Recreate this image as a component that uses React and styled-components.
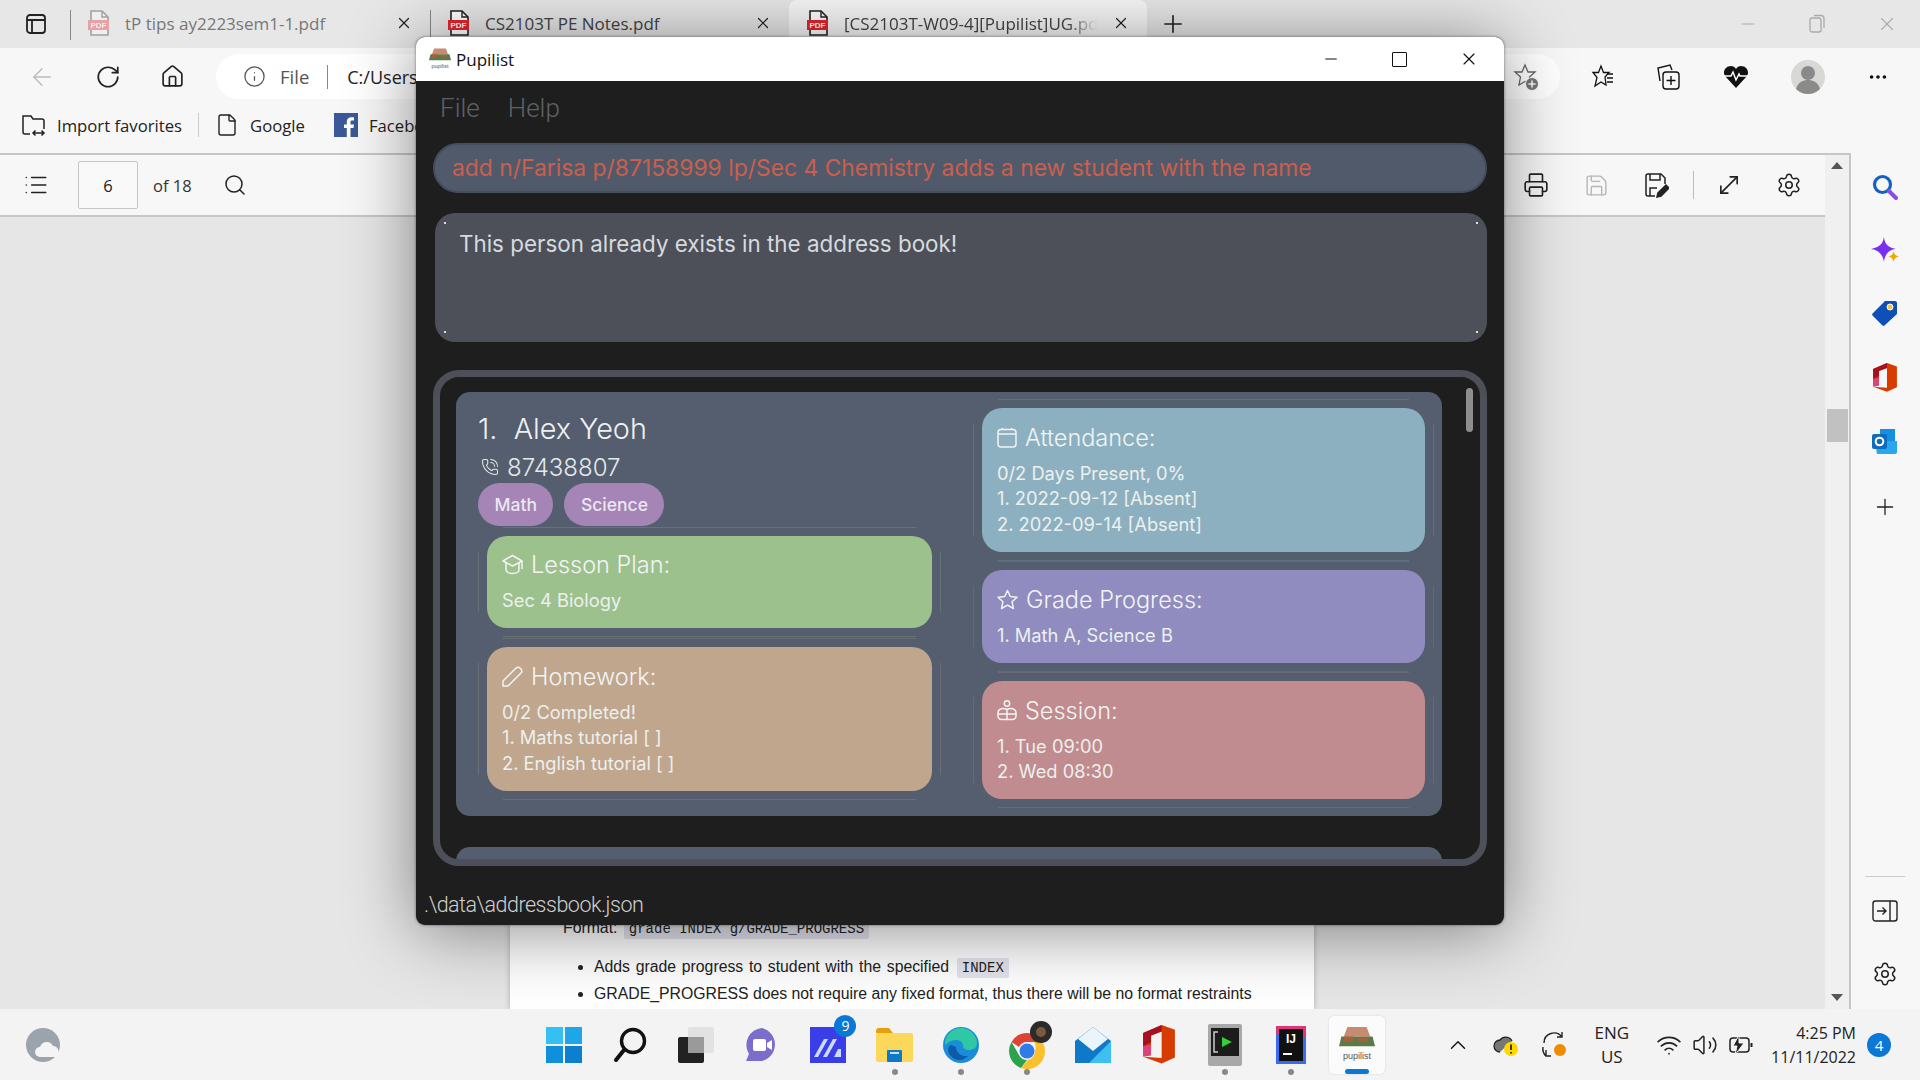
import styled, { createGlobalStyle } from 'styled-components'
import {
  ArrowLeft, RotateCw, Home, Info, X, Plus, Minus, Search, Ellipsis, File, Printer, Save,
  MoveDiagonal, Settings, PhoneCall, ChevronUp, Wifi, Volume2, List
} from 'lucide-react'

const GlobalStyle = createGlobalStyle`
  html, body { margin: 0; padding: 0; overflow: hidden; background: #e6e6e6; }
  * { box-sizing: border-box; }
`

const uiFont = '"Open Sans", "Noto Sans", sans-serif'
const appFont = 'Inter, "Noto Sans", sans-serif'
const thinFont = 'Roboto, "Noto Sans", sans-serif'

/* small hand drawn logos */
const PdfIcon = ({ faded }) => <svg width="22" height="26" viewBox="0 0 22 26" opacity={faded ? 0.35 : 1}>
  <path d="M3 1h11l6 6v18H3z" fill="#fff" stroke="#222" strokeWidth="1.6" />
  <path d="M14 1v6h6" fill="none" stroke="#222" strokeWidth="1.4" />
  <rect x="0" y="10" width="21" height="10" fill="#e8242c" />
  <text x="10.5" y="18" fontSize="8" fontWeight="700" textAnchor="middle" fill="#fff" fontFamily="Liberation Sans">PDF</text>
</svg>

const SidebarToggle = () => <svg width="22" height="22" viewBox="0 0 22 22" fill="none" stroke="#222" strokeWidth="1.8">
  <rect x="2" y="2" width="18" height="18" rx="3" />
  <path d="M2 7h18M7 7v13" />
</svg>

const RestoreIcon = () => <svg width="18" height="20" viewBox="0 0 18 20" fill="none" stroke="#aaa" strokeWidth="1.3">
  <rect x="2" y="4" width="11" height="14" rx="2" />
  <path d="M6 1.5h7a3 3 0 0 1 3 3V14" />
</svg>

const ImportIcon = () => <svg width="25" height="24" viewBox="0 0 25 24" fill="none" stroke="#222" strokeWidth="1.5">
  <path d="M9 21H4a2 2 0 0 1-2-2V3h8l2 3h9a2 2 0 0 1 2 2v8" />
  <path d="M12 20h11M14.5 17.5 12 20l2.5 2.5M20.5 17.5 23 20l-2.5 2.5" />
</svg>

const FbIcon = () => <svg width="24" height="24" viewBox="0 0 24 24">
  <rect width="24" height="24" fill="#3b5998" />
  <path d="M16.5 24v-9h3l.5-3.5h-3.5V9.300c0-1 .3-1.700 1.800-1.700H20V4.400c-.4 0-1.500-.1-2.700-.1-2.700 0-4.500 1.600-4.500 4.600v2.600H10V15h2.800v9z" fill="#fff" />
</svg>

const StarPlus = () => <svg width="26" height="28" viewBox="0 0 26 28" fill="none" stroke="#666" strokeWidth="1.3">
  <path d="M12 2l3 7h7l-5.500 5L18 22l-6-3.500L6 22l1.500-8L2 9h7z" />
  <circle cx="19" cy="21" r="6.500" fill="#777" stroke="#fff" strokeWidth="1" />
  <path d="M19 17.500v7M15.500 21h7" stroke="#fff" strokeWidth="1.5" />
</svg>

const StarList = () => <svg width="24" height="26" viewBox="0 0 24 26" fill="none" stroke="#111" strokeWidth="1.3">
  <path d="M11 2l2.500 6.500H19l-4 4.500 1 8-5-3-6 4 2-8.500L3 8.500h5.500z" />
  <path d="M17 10h6M17 14h6M17 18h6" />
</svg>

const CollectionsIcon = () => <svg width="25" height="28" viewBox="0 0 25 28" fill="none" stroke="#111" strokeWidth="1.4">
  <path d="M4 18 2 5l12-3 2 5" />
  <rect x="7" y="9" width="16" height="17" rx="3" />
  <path d="M15 13v9M10.5 17.500h9" />
</svg>

const HeartIcon = () => <svg width="26" height="24" viewBox="0 0 26 24">
  <path d="M13 23 2 11C-1 6 3 1 8 1c2 0 4 1 5 3 1-2 3-3 5-3 5 0 9 5 6 10z" fill="#111" />
  <path d="M1 11h7l2-4 3 8 3-6 1 2h8" fill="none" stroke="#fff" strokeWidth="1.5" />
</svg>

const Avatar = () => <svg width="34" height="34" viewBox="0 0 34 34">
  <circle cx="17" cy="17" r="17" fill="#d8d8d4" />
  <circle cx="17" cy="13" r="7" fill="#8a8a8a" />
  <path d="M5 29c2-7 7-9 12-9s10 2 12 9a17 17 0 0 1-24 0z" fill="#8a8a8a" />
</svg>

const SaveEdit = () => <svg width="25" height="26" viewBox="0 0 25 26" fill="none" stroke="#222" strokeWidth="1.5">
  <path d="M11 24H4a2 2 0 0 1-2-2V4a2 2 0 0 1 2-2h13l4 4v6" />
  <path d="M6 2v6h10V2M6 24v-8h7" />
  <path d="M13 25l1-4 8-8 3 3-8 8z" fill="#222" />
</svg>

const CollapseRail = () => <svg width="26" height="24" viewBox="0 0 26 24" fill="none" stroke="#222" strokeWidth="1.4">
  <rect x="1" y="2" width="24" height="20" rx="2.500" />
  <path d="M18 2v20M5 12h9M10.500 8.500 14 12l-3.500 3.500" />
</svg>

const SearchBlue = () => <svg width="26" height="26" viewBox="0 0 26 26" fill="none">
  <circle cx="10.5" cy="10.5" r="8" stroke="#1560c4" strokeWidth="3.200" />
  <path d="M17 17l7 7" stroke="#8a4ee0" strokeWidth="4" strokeLinecap="round" />
</svg>

const Sparkle = () => <svg width="28" height="26" viewBox="0 0 26 24">
  <path d="M12 0c1 7 4 10 11 11-7 1-10 5-11 12C11 16 7 12 0 11 7 10 11 7 12 0z" fill="#7a2ff0" />
  <path d="M21 13c.5 3 2 4.500 5 5-3 .5-4.500 2-5 5-.5-3-2-4.500-5-5 3-.5 4.500-2 5-5z" fill="#f0a800" />
</svg>

const TagIcon = () => <svg width="25" height="26" viewBox="0 0 25 26">
  <path d="M13 1h10a2 2 0 0 1 2 2v11L13 25a2 2 0 0 1-3 0L1 16a2 2 0 0 1 0-3z" fill="#0f4fb8" />
  <circle cx="18" cy="7" r="3" fill="#f6c93c" stroke="#fff" />
</svg>

const OfficeIcon = ({ size = 24 }) => <svg width={size} height={size * 1.2} viewBox="0 0 24 29">
  <path d="M14 0 24 3.500v21L14 29l-14-5 14 1V5L6 8v11l-6 4V6z" fill="#d83b01" />
  <path d="M14 0 0 6v10l6-3V8l8-3z" fill="#a80f1f" />
  <path d="M0 16l6-1v8l-6 1z" fill="#d8447c" />
</svg>

const OutlookIcon = () => <svg width="25" height="25" viewBox="0 0 25 25">
  <path d="M8 0h15v12H8z" fill="#1490df" />
  <path d="M3 12h22v11a2 2 0 0 1-2 2H5z" fill="#28a8ea" />
  <rect x="0" y="5" width="15" height="15" rx="2" fill="#0f6cbd" />
  <circle cx="7.5" cy="12.5" r="3.800" fill="none" stroke="#fff" strokeWidth="2" />
</svg>

const CloudOrb = () => <svg width="34" height="34" viewBox="0 0 34 34">
  <circle cx="17" cy="17" r="17" fill="#9ba4ac" />
  <path d="M14 29a5 5 0 0 1 0-10 7 7 0 0 1 13-1 6 6 0 0 1 3 11z" fill="#f4f4f4" />
</svg>

const WinLogo = () => <svg width="36" height="36" viewBox="0 0 36 36">
  <rect width="17" height="17" fill="#35c0f4" /><rect x="19" width="17" height="17" fill="#1fa6e8" />
  <rect y="19" width="17" height="17" fill="#0f8fdc" /><rect x="19" y="19" width="17" height="17" fill="#0c7fd0" />
</svg>

const TaskSearch = () => <svg width="34" height="36" viewBox="0 0 34 36" fill="none" stroke="#111" strokeWidth="3.400">
  <circle cx="20" cy="14" r="11.500" /><path d="M11 23 3 33" strokeLinecap="round" strokeWidth="4" />
</svg>

const TaskView = () => <svg width="36" height="36" viewBox="0 0 36 36">
  <rect x="10" y="0" width="26" height="26" rx="2" fill="#e2e2e2" />
  <rect x="0" y="10" width="26" height="26" rx="2" fill="#222" />
  <rect x="10" y="10" width="16" height="16" fill="#9a9a9a" />
</svg>

const TeamsChat = () => <svg width="36" height="36" viewBox="0 0 36 36">
  <path d="M18 1a17 17 0 0 1 0 33H2l3-7A17 17 0 0 1 18 1z" fill="#7b6dcc" />
  <rect x="9" y="12" width="13" height="12" rx="2" fill="#fff" />
  <path d="M23 16l5-3v10l-5-3z" fill="#fff" />
</svg>

const AutomateIcon = () => <svg width="36" height="36" viewBox="0 0 36 36">
  <rect width="36" height="36" fill="#3a3ee8" />
  <path d="M4 30 14 12h4L8 30zM13 30l10-18h4L17 30zM24 30l4-8h3v8z" fill="#cfd8ff" />
</svg>

const FolderIcon = () => <svg width="37" height="34" viewBox="0 0 37 34">
  <path d="M0 3a3 3 0 0 1 3-3h10l4 5H0z" fill="#e0a010" />
  <rect y="5" width="37" height="29" rx="2" fill="#fbd85a" />
  <rect x="11" y="22" width="15" height="12" rx="1" fill="#0f78c8" />
  <rect x="14" y="24" width="9" height="2" fill="#bfe2fa" />
</svg>

const EdgeIcon = () => <svg width="36" height="36" viewBox="0 0 36 36">
  <circle cx="18" cy="18" r="18" fill="#1b8dd8" />
  <path d="M2 18a16 16 0 0 1 32-2c0 5-4 7-8 7-4 0-6-2-6-4 0-4-3-6-7-6-6 0-11 5-11 5z" fill="#2fc7a4" />
  <path d="M13 20c0 6 6 10 12 9-3 4-12 7-18-1-3-4-2-9 1-10z" fill="#0d5aa8" />
</svg>

const ChromeIcon = () => <svg width="36" height="48" viewBox="0 0 36 48" overflow="visible">
  <g transform="translate(0 12)">
    <path d="M18 0a18 18 0 0 1 15.600 9H18a9 9 0 0 0-8 5L2.500 9A18 18 0 0 1 18 0z" fill="#dd4437" />
    <path d="M2.500 9 10 22a9 9 0 0 0 8 5l-6 8A18 18 0 0 1 2.500 9z" fill="#2ca24c" />
    <path d="M33.600 9A18 18 0 0 1 12 35l7-8a9 9 0 0 0 7-9 9 9 0 0 0-1-9z" fill="#fbc02d" />
    <circle cx="18" cy="18" r="7.500" fill="#2f7ce8" />
  </g>
  <circle cx="32" cy="11" r="11" fill="#2b2b2b" />
  <circle cx="32" cy="11" r="5" fill="#7a5a3c" />
</svg>

const MailIcon = () => <svg width="36" height="36" viewBox="0 0 36 36">
  <path d="M18 0 36 14v22H0V14z" fill="#0f78c8" />
  <path d="M18 0 33 12 18 24 3 12z" fill="#eaf4fb" />
  <path d="M36 14v22H14z" fill="#3dc0f0" />
</svg>

const TermIcon = () => <svg width="34" height="42" viewBox="0 0 34 42">
  <rect width="34" height="42" rx="2" fill="#a8a8a8" />
  <rect x="3" y="4" width="28" height="28" fill="#1c1c1c" />
  <path d="M14 13l10 5-10 5z" fill="#35d035" />
  <path d="M10 8H6v20h4" fill="none" stroke="#ccc" strokeWidth="1.5" />
</svg>

const IdeaIcon = () => <svg width="30" height="38" viewBox="0 0 30 38">
  <rect width="30" height="38" fill="#3a6cf0" />
  <path d="M0 0h30v12L0 8z" fill="#e0357a" />
  <rect x="3" y="3" width="24" height="32" fill="#111" />
  <text x="15" y="17" fontSize="12" fontWeight="700" textAnchor="middle" fill="#fff" fontFamily="Liberation Sans">IJ</text>
  <rect x="7" y="27" width="9" height="2" fill="#fff" />
</svg>

const PupilLogo = ({ width = 30, height = 34 }) => <svg width={width} height={height} viewBox="0 0 30 34">
  <path d="M7 2h16l3 8H4z" fill="#c88a70" />
  <path d="M2 10h26l2 8H0z" fill="#5a7a48" />
  <path d="M4 10h8v4H4zM16 11h8v3h-8z" fill="#a8603c" />
  <text x="15" y="29" fontSize="7.500" textAnchor="middle" fill="#555" fontFamily="Liberation Sans">pupilist</text>
</svg>

const OneDriveWarn = () => <svg width="26" height="26" viewBox="0 0 26 26">
  <path d="M7 20a6 6 0 0 1 0-12 7 7 0 0 1 12 1" fill="#777" stroke="#222" strokeWidth="1.3" />
  <circle cx="18" cy="17" r="7" fill="#ffd800" />
  <path d="M18 12.500v5.500M18 20v1.500" stroke="#111" strokeWidth="1.6" />
</svg>

const SyncIcon = () => <svg width="26" height="30" viewBox="0 0 26 30" fill="none" stroke="#222" strokeWidth="1.4">
  <path d="M3 13a10 10 0 0 1 18-6M21 2v5h-5" />
  <path d="M5 20v6h5M5 26a10 10 0 0 1-3-9" />
  <circle cx="19" cy="20" r="6" fill="#f08a00" stroke="none" />
</svg>

const BatteryIcon = () => <svg width="26" height="22" viewBox="0 0 26 22" fill="none" stroke="#222" strokeWidth="1.5">
  <rect x="2" y="4" width="19" height="14" rx="3" />
  <path d="M23.5 9v4" strokeWidth="2" />
  <path d="M11 1 5 12h4l-2 9 9-12h-5z" fill="#222" stroke="#f3f3f3" strokeWidth="1" />
</svg>

const CapIcon = () => <svg width="21" height="21" viewBox="0 0 21 21" fill="none" stroke="currentColor" strokeWidth="1.5" strokeLinejoin="round">
  <path d="M10.5 1.500 20 7l-9.500 5L1 7z" />
  <path d="M4 9v6.500c0 2.500 3 4 6.500 4s6.500-1.500 6.500-4V9M20 7v8" />
</svg>

const PencilIcon = () => <svg width="21" height="21" viewBox="0 0 21 21" fill="none" stroke="currentColor" strokeWidth="1.5" strokeLinejoin="round">
  <path d="M1 20V15L14 2a2.800 2.800 0 0 1 4 0l1 1a2.800 2.800 0 0 1 0 4L6 20z" />
</svg>

const StarIcon = () => <svg width="21" height="21" viewBox="0 0 21 21" fill="none" stroke="currentColor" strokeWidth="1.5" strokeLinejoin="round">
  <path d="M10.500 1.500 13.300 7.500 20 8.300l-4.900 4.500 1.300 6.700-5.900-3.300-5.900 3.300 1.300-6.700L1 8.300l6.700-.8z" />
</svg>

const SessionIcon = () => <svg width="20" height="21" viewBox="0 0 20 21" fill="none" stroke="currentColor" strokeWidth="1.5">
  <circle cx="10" cy="3.500" r="2.700" />
  <path d="M10 9.500C7 8 1 8 1 13v3a3.500 3.500 0 0 0 3.500 3.500h11A3.500 3.500 0 0 0 19 16v-3c0-5-6-5-9-3.500zM10 9.500v10M1 14h18" />
</svg>

const CalIcon = () => <svg width="20" height="21" viewBox="0 0 20 21" fill="none" stroke="currentColor" strokeWidth="1.5">
  <rect x="1" y="2.500" width="18" height="17.500" rx="3" />
  <path d="M1 7h18M5.500 1v2M14.500 1v2" />
</svg>

const tabs = [
  { w: 360, title: 'tP tips ay2223sem1-1.pdf', faded: true },
  { w: 359, title: 'CS2103T PE Notes.pdf' },
  { w: 358, title: '[CS2103T-W09-4][Pupilist]UG.pd', active: true }
]

const taskItems = [
  { el: <WinLogo /> }, { el: <TaskSearch /> }, { el: <TaskView /> }, { el: <TeamsChat /> },
  { el: <AutomateIcon />, badge: '9' }, { el: <FolderIcon />, running: true }, { el: <EdgeIcon />, running: true },
  { el: <ChromeIcon />, running: true }, { el: <MailIcon /> }, { el: <OfficeIcon size={32} /> },
  { el: <TermIcon />, running: true }, { el: <IdeaIcon />, running: true }, { el: <PupilLogo width={36} height={42} />, active: true }
]

const InfoCard = ({ bg, icon, title, lines }) => <InfoPanel $bg={bg}>
  <InfoTitle>{icon}<span>{title}</span></InfoTitle>
  <InfoBody>{lines.map((l, i) => <div key={i}>{l}</div>)}</InfoBody>
</InfoPanel>

export default function App() {
  return <Root>
    <GlobalStyle />
    <TabStrip>
      <SidebarSlot><SidebarToggle /></SidebarSlot>
      {tabs.map((t, i) => <Tab key={i} $w={t.w} $active={t.active}>
        <PdfIcon faded={t.faded} />
        <TabTitle $faded={t.faded} $active={t.active}>{t.title}</TabTitle>
        <X size={18} strokeWidth={1.6} color="#222" />
      </Tab>)}
      <NewTab><Plus size={28} strokeWidth={1.4} color="#222" /></NewTab>
      <WinButtons>
        <Minus size={20} strokeWidth={1.2} color="#aaa" />
        <RestoreIcon />
        <X size={22} strokeWidth={1.2} color="#aaa" />
      </WinButtons>
    </TabStrip>

    <Toolbar>
      <ArrowLeft size={28} strokeWidth={1.2} color="#bbb" />
      <RotateCw size={26} strokeWidth={1.6} color="#222" />
      <Home size={25} strokeWidth={1.6} color="#222" />
      <AddressPill>
        <Info size={23} strokeWidth={1.3} color="#555" />
        <AddrFile>File</AddrFile>
        <AddrSep />
        <AddrUrl>C:/Users</AddrUrl>
        <PillStar><StarPlus /></PillStar>
      </AddressPill>
      <ToolRight>
        <StarList /><CollectionsIcon /><HeartIcon /><Avatar /><Ellipsis size={22} color="#111" />
      </ToolRight>
    </Toolbar>

    <FavBar>
      <FavItem><ImportIcon />Import favorites</FavItem>
      <FavSep />
      <FavItem><File size={24} strokeWidth={1.4} />Google</FavItem>
      <FavItem><FbIcon />Facebook</FavItem>
    </FavBar>

    <Content>
      <PdfColumn>
        <Viewer>
          <PdfBar>
            <List size={26} strokeWidth={1.4} color="#222" />
            <PageBox>6</PageBox>
            <PageOf>of 18</PageOf>
            <Search size={24} strokeWidth={1.5} color="#222" />
            <PdfBarRight>
              <Printer size={26} strokeWidth={1.5} color="#222" />
              <Save size={25} strokeWidth={1.3} color="#b5b5b5" />
              <SaveEdit />
              <BarSep />
              <MoveDiagonal size={28} strokeWidth={1.4} color="#222" />
              <Settings size={26} strokeWidth={1.4} color="#222" />
            </PdfBarRight>
          </PdfBar>
          <PdfView>
            <PdfPage>
              <FormatLine>Format: <Code>grade INDEX g/GRADE_PROGRESS</Code></FormatLine>
              <PageList>
                <PageItem $wide>Adds grade progress to student with the specified <Code>INDEX</Code></PageItem>
                <PageItem>GRADE_PROGRESS does not require any fixed format, thus there will be no format restraints</PageItem>
              </PageList>
            </PdfPage>
          </PdfView>
        </Viewer>
        <ScrollCol>
          <ArrowUp />
          <ScrollThumb />
          <ArrowDown />
        </ScrollCol>
      </PdfColumn>
      <SideRail>
        <SearchBlue /><Sparkle /><TagIcon /><OfficeIcon size={24} /><OutlookIcon />
        <RailPlus><Plus size={26} strokeWidth={1.2} color="#222" /></RailPlus>
        <RailFoot>
          <RailLine />
          <CollapseRail />
          <Settings size={26} strokeWidth={1.4} color="#222" />
        </RailFoot>
      </SideRail>
    </Content>

    <Taskbar>
      <CloudOrb />
      <TaskGroup>
        {taskItems.map((t, i) => <TaskSlot key={i}>
          {t.active ? <ActiveTile>{t.el}<TaskLine /></ActiveTile> : t.el}
          {t.badge && <TaskBadge>{t.badge}</TaskBadge>}
          {t.running && <TaskDot />}
        </TaskSlot>)}
      </TaskGroup>
      <Tray>
        <ChevronUp size={26} strokeWidth={1.3} color="#111" />
        <OneDriveWarn />
        <SyncIcon />
        <Lang>ENG<br />US</Lang>
        <TrayIcons>
          <Wifi size={26} strokeWidth={1.6} color="#222" />
          <Volume2 size={26} strokeWidth={1.4} color="#222" />
          <BatteryIcon />
        </TrayIcons>
        <Clock>4:25 PM<br />11/11/2022</Clock>
        <NotifDot>4</NotifDot>
      </Tray>
    </Taskbar>

    <AppWindow>
      <TitleBar>
        <PupilLogo width={22} height={25} />
        <TitleText>Pupilist</TitleText>
        <TitleButtons>
          <Minus size={18} strokeWidth={1.5} color="#111" />
          <MaxBox />
          <X size={20} strokeWidth={1.4} color="#111" />
        </TitleButtons>
      </TitleBar>
      <AppBody>
        <MenuRow><span>File</span><span>Help</span></MenuRow>
        <CommandBox>add n/Farisa p/87158999 lp/Sec 4 Chemistry adds a new student with the name</CommandBox>
        <ResultBox>This person already exists in the address book!</ResultBox>
        <ListPanel>
          <ScrollPill />
          <PersonCard>
            <LeftCol>
              <NameLine>1.&nbsp; Alex Yeoh</NameLine>
              <PhoneLine><PhoneCall size={18} strokeWidth={1.4} />87438807</PhoneLine>
              <TagRow><TagPill>Math</TagPill><TagPill>Science</TagPill></TagRow>
              <CardStack>
                <InfoCard bg="#9dc18d" icon={<CapIcon />} title="Lesson Plan:" lines={['Sec 4 Biology']} />
                <InfoCard bg="#c0a68d" icon={<PencilIcon />} title="Homework:" lines={['0/2 Completed!', '1. Maths tutorial [ ]', '2. English tutorial [ ]']} />
              </CardStack>
            </LeftCol>
            <RightCol>
              <InfoCard bg="#8cb0c0" icon={<CalIcon />} title="Attendance:" lines={['0/2 Days Present, 0%', '1. 2022-09-12 [Absent]', '2. 2022-09-14 [Absent]']} />
              <InfoCard bg="#918cbf" icon={<StarIcon />} title="Grade Progress:" lines={['1. Math A, Science B']} />
              <InfoCard bg="#c08c8f" icon={<SessionIcon />} title="Session:" lines={['1. Tue 09:00', '2. Wed 08:30']} />
            </RightCol>
          </PersonCard>
          <PeekCard />
        </ListPanel>
        <StatusPath>.\data\addressbook.json</StatusPath>
      </AppBody>
    </AppWindow>
  </Root>
}

const Root = styled.div`
  position: relative; width: 1920px; height: 1080px; overflow: hidden;
  display: flex; flex-direction: column;
  font-family: ${uiFont}; background: #e6e6e6; color: #222;
`

const TabStrip = styled.div`
  height: 48px; flex: none; display: flex; align-items: flex-end; background: #e7e7e7;
`
const SidebarSlot = styled.div`
  width: 70px; height: 48px; padding: 13px 0 0 25px;
`
const Tab = styled.div`
  width: ${p => p.$w}px; height: 48px; display: flex; align-items: center; flex: none;
  padding: 0 17px 2px 18px; gap: 15px; position: relative;
  background: ${p => p.$active ? '#f7f7f7' : 'transparent'};
  border-radius: 8px 8px 0 0;
  &::before {
    content: ''; position: absolute; left: 0; top: 10px; height: 30px; width: 1px;
    background: ${p => p.$active ? 'transparent' : '#888'};
  }
`
const TabTitle = styled.span`
  flex: 1; font-size: 17px; white-space: nowrap; overflow: hidden;
  color: ${p => p.$faded ? '#777' : '#444'};
  ${p => p.$active && 'mask-image: linear-gradient(90deg, #000 88%, transparent 100%);'}
`
const NewTab = styled.div`
  width: 52px; height: 48px; display: flex; align-items: center; padding-left: 12px;
`
const WinButtons = styled.div`
  margin-left: auto; height: 48px; display: flex; align-items: center; gap: 50px; padding-right: 22px;
`

const Toolbar = styled.div`
  height: 57px; flex: none; display: flex; align-items: center; background: #f7f7f7;
  padding-left: 28px; gap: 39px; position: relative;
`
const AddressPill = styled.div`
  width: 1344px; height: 45px; margin-left: -8px; background: #fff; border-radius: 23px;
  display: flex; align-items: center; padding-left: 27px;
`
const AddrFile = styled.span` font-size: 18.500px; color: #555; margin-left: 14px; `
const AddrSep = styled.span` width: 1px; height: 24px; background: #888; margin: 0 19px 0 18px; `
const AddrUrl = styled.span` font-size: 18px; color: #222; `
const PillStar = styled.span` margin-left: auto; margin-right: 21px; display: flex; `
const ToolRight = styled.div`
  display: flex; align-items: center; gap: 42px; margin-left: -9px;
`

const FavBar = styled.div`
  height: 48px; flex: none; display: flex; align-items: center; gap: 16px; background: #f7f7f7;
  padding: 0 0 8px 21px;
`
const FavItem = styled.div`
  display: flex; align-items: center; gap: 11px; font-size: 16.700px; color: #222; white-space: nowrap;
  & + & { margin-left: 13px; }
`
const FavSep = styled.div` width: 1px; height: 24px; background: #ccc; `

const Content = styled.div` flex: 1; display: flex; min-height: 0; `
const PdfColumn = styled.div`
  width: 1851px; display: flex; border-top: 2px solid #c6c6c6; border-right: 2px solid #c6c6c6;
`
const Viewer = styled.div` width: 1825px; display: flex; flex-direction: column; `
const PdfBar = styled.div`
  height: 62px; flex: none; display: flex; align-items: center; background: #f7f7f7;
  border-bottom: 2px solid #c6c6c6; padding: 0 23px 0 23px;
`
const PageBox = styled.div`
  width: 60px; height: 48px; margin-left: 29px; border: 1px solid #c6c6c6; border-radius: 2px;
  display: flex; align-items: center; justify-content: center; font-size: 16.500px; background: #f9f9f9;
`
const PageOf = styled.span` margin: 0 31px 0 15px; font-size: 16.500px; color: #333; `
const PdfBarRight = styled.div`
  margin-left: auto; display: flex; align-items: center; gap: 35px;
  & > svg:last-child { margin-left: -2px; }
`
const BarSep = styled.div` width: 1px; height: 28px; background: #bbb; margin: 0 -14px 0 -11px; `
const PdfView = styled.div`
  flex: 1; min-height: 0; background: #e6e6e6; display: flex; align-items: flex-end; padding-left: 510px;
`
const PdfPage = styled.div`
  width: 804px; background: #fff; padding: 0 0 2px 53px; font-family: "Liberation Sans", sans-serif;
  font-size: 15.800px; line-height: 26px; color: #222; box-shadow: 0 0 6px rgba(0,0,0,.25);
`
const FormatLine = styled.div` margin-bottom: 12px; `
const PageList = styled.ul` margin: 0; padding-left: 31px; `
const PageItem = styled.li` word-spacing: ${p => p.$wide ? '1.3px' : '0'}; `
const Code = styled.code`
  font-family: "Liberation Mono", monospace; font-size: 14px; background: #e4e4ee;
  padding: 2px 5px; border-radius: 2px; margin-left: 2px;
`
const ScrollCol = styled.div`
  width: 24px; background: #f0f0f0; display: flex; flex-direction: column; align-items: center; padding: 7px 0 8px;
`
const ArrowUp = styled.div`
  width: 0; height: 0; border: 6px solid transparent; border-top: 0; border-bottom: 7px solid #555;
`
const ArrowDown = styled.div`
  width: 0; height: 0; border: 6px solid transparent; border-bottom: 0; border-top: 7px solid #555; margin-top: auto;
`
const ScrollThumb = styled.div` width: 21px; height: 33px; background: #c1c1c1; margin-top: 240px; `

const SideRail = styled.div`
  width: 69px; background: #f7f7f7; display: flex; flex-direction: column; align-items: center;
  gap: 37px; padding: 21px 2px 22px 0;
`
const RailPlus = styled.div` display: flex; margin-top: 3px; `
const RailFoot = styled.div`
  margin-top: auto; display: flex; flex-direction: column; align-items: center; gap: 38px;
`
const RailLine = styled.div` width: 40px; height: 1px; background: #ccc; margin-bottom: -16px; `

const Taskbar = styled.div`
  height: 71px; flex: none; background: #f3f3f3; display: flex; align-items: center;
  padding-left: 26px; position: relative;
`
const TaskGroup = styled.div` display: flex; margin-left: 471px; `
const TaskSlot = styled.div`
  width: 66.100px; height: 60px; display: flex; align-items: center; justify-content: center; position: relative;
`
const ActiveTile = styled.div`
  width: 56px; height: 58px; background: #fbfbfb; border-radius: 5px; box-shadow: 0 0 2px rgba(0,0,0,.15);
  display: flex; align-items: center; justify-content: center; position: relative;
`
const TaskBadge = styled.span`
  position: absolute; top: 0; right: 5px; width: 22px; height: 22px; border-radius: 50%;
  background: #0a78d4; color: #fff; font-size: 14px; display: flex; align-items: center; justify-content: center;
`
const TaskDot = styled.span`
  position: absolute; bottom: 0; left: 50%; margin-left: -3px; width: 6px; height: 6px; border-radius: 50%; background: #888;
`
const TaskLine = styled.span`
  position: absolute; bottom: 0; left: 50%; margin-left: -12px; width: 24px; height: 5px; border-radius: 3px; background: #0a78d4;
`
const Tray = styled.div`
  margin-left: auto; display: flex; align-items: center; padding-right: 29px; gap: 22px;
`
const Lang = styled.div`
  font-size: 17px; line-height: 24px; text-align: center; margin-left: 5px; color: #222;
`
const TrayIcons = styled.div` display: flex; align-items: center; gap: 10px; margin-left: 5px; `
const Clock = styled.div`
  font-size: 16px; line-height: 24px; text-align: right; margin: 0 -11px 0 -5px; color: #222;
`
const NotifDot = styled.div`
  width: 24px; height: 24px; border-radius: 50%; background: #0a78d4; color: #fff; font-size: 15px;
  display: flex; align-items: center; justify-content: center;
`

const AppWindow = styled.div`
  position: absolute; left: 416px; top: 37px; width: 1088px; height: 888px;
  display: flex; flex-direction: column; border-radius: 9px; overflow: hidden; background: #1e1e1e;
  box-shadow: 0 6px 70px rgba(0,0,0,.45), 0 0 3px rgba(0,0,0,.5);
`
const TitleBar = styled.div`
  height: 44px; flex: none; background: #fff; display: flex; align-items: center; padding-left: 13px;
`
const TitleText = styled.span`
  font-size: 17px; color: #111; margin-left: 5px;
`
const TitleButtons = styled.div`
  margin-left: auto; display: flex; align-items: center; gap: 52px; padding-right: 25px;
`
const MaxBox = styled.div` width: 15px; height: 15px; border: 1.500px solid #111; border-radius: 1px; `
const AppBody = styled.div`
  flex: 1; min-height: 0; display: flex; flex-direction: column; padding: 0 17px; font-family: ${appFont};
`
const MenuRow = styled.div`
  height: 62px; flex: none; display: flex; align-items: center; gap: 28px; padding: 0 0 9px 7px;
  font-family: ${thinFont}; font-size: 26px; font-weight: 300; color: #5e6268;
`
const CommandBox = styled.div`
  height: 50px; flex: none; border: 2px solid #454d5c; border-radius: 25px; background: #515a6b;
  display: flex; align-items: center; padding-left: 17px; color: #cb5f4c; font-size: 22.870px; white-space: nowrap;
`
const cornerSpeck = 'linear-gradient(#ddd, #ddd)'
const ResultBox = styled.div`
  height: 129px; flex: none; margin: 20px 0 0 2px; border-radius: 20px; padding: 16px 24px;
  background: ${cornerSpeck} 9px 9px / 2px 2px no-repeat, ${cornerSpeck} 9px 118px / 2px 2px no-repeat,
    ${cornerSpeck} 1041px 9px / 2px 2px no-repeat, ${cornerSpeck} 1041px 118px / 2px 2px no-repeat, #4d5058;
  color: #d6dade; font-size: 22.400px; line-height: 30px;
`
const ListPanel = styled.div`
  height: 496px; flex: none; margin-top: 28px; position: relative; overflow: hidden;
  border: 7px solid #4d5058; border-radius: 26px; background: #1e1e1e;
  padding: 15px 38px 0 16px; display: flex; flex-direction: column; gap: 31px;
`
const ScrollPill = styled.div`
  position: absolute; left: 1026px; top: 11px; width: 7px; height: 44px; border-radius: 4px; background: #8e8e8e;
`
const PersonCard = styled.div`
  height: 424px; flex: none; display: flex; background: #545e6f; border-radius: 14px;
`
const PeekCard = styled.div` height: 100px; flex: none; background: #545e6f; border-radius: 14px; `
const LeftCol = styled.div` width: 476.500px; padding: 16px 0 0 22px; flex: none; `
const NameLine = styled.div`
  font-size: 28.800px; line-height: 42px; color: #eef0f2; font-weight: 300; white-space: nowrap;
`
const PhoneLine = styled.div`
  display: flex; align-items: center; gap: 8px; height: 30px; margin-top: 2px; padding-left: 3px;
  font-size: 24px; color: #e6e8ea; font-weight: 300;
`
const TagRow = styled.div` display: flex; gap: 11px; margin-top: 1px; `
const TagPill = styled.div`
  height: 43px; padding: 0 16.500px; border-radius: 22px; background: #a585b5; color: #ebe6f2;
  display: flex; align-items: center; font-size: 17.500px; font-weight: 500;
`
const CardStack = styled.div`
  display: flex; flex-direction: column; gap: 19px; margin: 9.500px 0 0 8.500px; width: 445px;
`
const RightCol = styled.div`
  width: 443.500px; margin-left: 49px; padding-top: 16px; display: flex; flex-direction: column; gap: 18.500px;
`
const InfoPanel = styled.div`
  position: relative; background: ${p => p.$bg}; border-radius: 20px; padding: 15px 15.500px 14.500px;
  &::before {
    content: ''; position: absolute; inset: -9px 16px; opacity: .22; pointer-events: none;
    border-top: 1px solid ${p => p.$bg}; border-bottom: 1px solid ${p => p.$bg};
  }
  &::after {
    content: ''; position: absolute; inset: 16px -9px; opacity: .22; pointer-events: none;
    border-left: 1px solid ${p => p.$bg}; border-right: 1px solid ${p => p.$bg};
  }
`
const InfoTitle = styled.div`
  height: 28px; display: flex; align-items: center; gap: 8px; font-size: 23.500px; color: #f2f4f4; font-weight: 300;
  white-space: nowrap;
  & > svg { flex: none; }
`
const InfoBody = styled.div`
  margin-top: 9.500px; font-size: 18.300px; line-height: 25.500px; color: #ecf0ee; font-weight: 400;
`
const StatusPath = styled.div`
  margin: 24px 0 0 -9px; font-family: ${thinFont}; font-size: 21.500px; letter-spacing: -.5px; line-height: 30px; font-weight: 300; color: #d0d0d0;
`
